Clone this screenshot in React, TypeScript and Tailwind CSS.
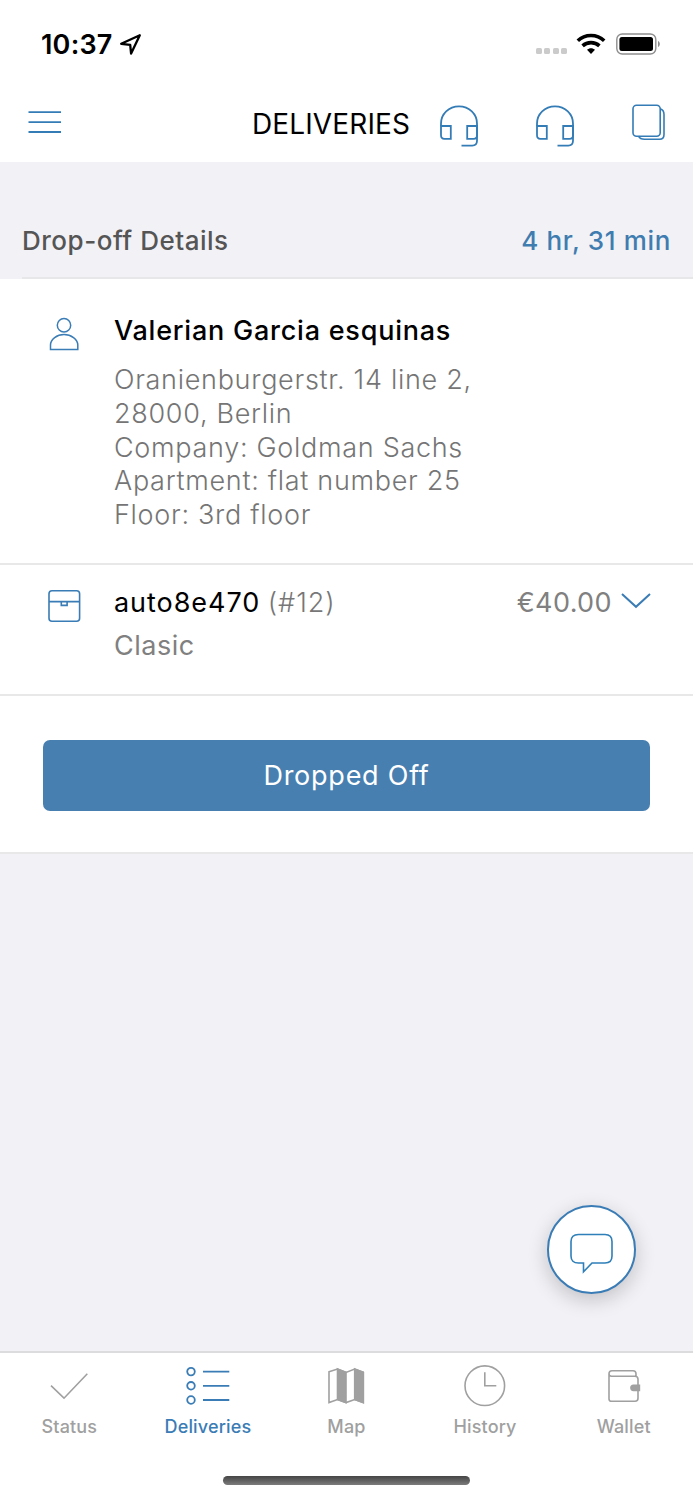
import type { ReactNode } from 'react';

const address = [
  'Oranienburgerstr. 14 line 2,',
  '28000, Berlin',
  'Company: Goldman Sachs',
  'Apartment: flat number 25',
  'Floor: 3rd floor',
];

function HeadsetIcon() {
  return (
    <svg width="40" height="44" viewBox="0 0 40 44" fill="none" stroke="currentColor" strokeWidth="1.8">
      <path d="M2 21.7V19.5C2 10 9.8 2.4 20 2.4C30.2 2.4 38 10 38 19.5V36.8Q38 41.6 33.2 41.6H22.5" />
      <path d="M2 22H11.8V34.8H5.4Q2 34.8 2 31.2Z" />
      <path d="M38 22H28.2V34.8H34.6Q38 34.8 38 31.2Z" />
    </svg>
  );
}

function CardsIcon() {
  return (
    <svg width="36" height="38" viewBox="0 0 36 38" fill="none" stroke="currentColor" strokeWidth="1.6">
      <rect x="2" y="1.2" width="27.2" height="31" rx="3.5" />
      <path d="M29.2 4.8C31.5 5.6 33 7.5 33 10.5V30.5Q33 35.3 28.5 35.3H13.5C10.5 35.3 8.5 34.3 7.5 32.2" />
    </svg>
  );
}

function StatusBar() {
  return (
    <div className="flex h-[88px] items-center pl-[41px] pr-8">
      <span className="pt-0.5 text-[27px] font-semibold leading-8 tracking-[0.2px]">10:37</span>
      <svg className="ml-1.5" width="24" height="24" viewBox="0 0 24 24" fill="none" stroke="#000" strokeWidth="2.3" strokeLinejoin="round">
        <path d="M20.8 3.2L2.2 11.8L11.2 12.8L12.1 21.6Z" />
      </svg>
      <div className="ml-auto flex gap-[2.6px] pt-3.5">
        {[0, 1, 2, 3].map(i => (
          <span key={i} className="h-[5.6px] w-[5.8px] rounded-[1.6px] bg-[#cbcbcb]" />
        ))}
      </div>
      <svg className="ml-[9px]" width="30" height="22" viewBox="0 0 30 22" fill="none" stroke="#000" strokeWidth="3.6">
        <path d="M1.8 7.7C9 0.8 21 0.8 28.2 7.7" />
        <path d="M6.6 12.8C11.2 8.6 18.8 8.6 23.4 12.8" />
        <path d="M11 16.8C13.2 14.6 16.8 14.6 19 16.8L15 21Z" fill="#000" stroke="none" />
      </svg>
      <svg className="ml-[9px]" width="46" height="22" viewBox="0 0 46 22">
        <rect x="1.8" y="1" width="39" height="20" rx="5.5" fill="none" stroke="#8e8e8e" strokeWidth="1.4" />
        <rect x="4.4" y="4" width="33.6" height="14" rx="2.5" fill="#000" />
        <path d="M43 8C45.4 9 45.4 13 43 14Z" fill="#8e8e8e" />
      </svg>
    </div>
  );
}

function NavBar() {
  return (
    <div className="flex h-[74px] items-start pl-7 text-[#347cb6]">
      <svg className="mt-[22px]" width="34" height="24" viewBox="0 0 34 24" stroke="currentColor" strokeWidth="1.8">
        <path d="M0.5 2.2H33M0.5 12.2H33M0.5 22H33" />
      </svg>
      <h1 className="ml-[190px] mt-5 w-[187px] whitespace-nowrap text-[28px] leading-8 tracking-[0.12px] text-black">DELIVERIES</h1>
      <div className="mt-4 flex">
        <HeadsetIcon />
        <div className="ml-14"><HeadsetIcon /></div>
        <div className="ml-14"><CardsIcon /></div>
      </div>
    </div>
  );
}

function Tab({ label, active, children }: { label: string; active?: boolean; children: ReactNode }) {
  return (
    <div className={`flex flex-1 flex-col items-center ${active ? 'text-[#3a7cb5]' : 'text-[#a0a0a0]'}`}>
      <svg width="46" height="46" viewBox="0 0 46 46" fill="none" stroke="currentColor" strokeWidth="1.6">
        {children}
      </svg>
      <span className="mt-1 text-[18px] font-medium leading-6 tracking-[0.15px]">{label}</span>
    </div>
  );
}

export default function App() {
  return (
    <div className="flex h-[1500px] w-[693px] flex-col overflow-hidden bg-[#f2f1f6] font-['Inter',sans-serif] text-black">
      <header className="bg-white">
        <StatusBar />
        <NavBar />
      </header>

      {/* Section title */}
      <div className="h-[117px] pl-[22px]">
        <div className="flex h-full items-center justify-between border-b-2 border-[#e7e7e9] pr-[22px] pt-[42px] text-[26px] font-medium">
          <h2 className="whitespace-nowrap tracking-[0.52px] text-[#555]">Drop-off Details</h2>
          <span className="whitespace-nowrap tracking-[0.65px] text-[#3f7cb0]">4 hr, 31 min</span>
        </div>
      </div>

      <main className="bg-white">
        {/* Customer */}
        <section className="flex h-[286px] border-b-2 border-[#e8e8e8] pl-12 pt-9">
          <svg className="mt-[2px]" width="32" height="34" viewBox="0 0 32 34" fill="none" stroke="#3a7cb5" strokeWidth="1.5">
            <circle cx="16" cy="8.2" r="6.7" />
            <path d="M2.5 32.6V28C2.5 22 9 17.6 16 17.6S29.8 22 29.8 28V32.6Z" />
          </svg>
          <div className="ml-[34px] whitespace-nowrap text-[27px]">
            <p className="font-medium leading-8 tracking-[0.77px]">Valerian Garcia esquinas</p>
            <div className="mt-4 font-light leading-[33.8px] tracking-[0.7px] text-[#757575]">
              {address.map(line => (
                <p key={line}>{line}</p>
              ))}
            </div>
          </div>
        </section>

        {/* Order */}
        <section className="flex h-[131px] border-b-2 border-[#e8e8e8] pl-12 pr-[42px] pt-[22px]">
          <svg className="mt-[2px]" width="33" height="34" viewBox="0 0 33 34" fill="none" stroke="#3a7cb5" strokeWidth="1.6">
            <rect x="1" y="1.7" width="30.6" height="30.6" rx="3" />
            <path d="M1 12.6H31.6M13.3 12.6V16.4H19.1V12.6" />
          </svg>
          <div className="ml-[33px] whitespace-nowrap text-[27px] leading-8">
            <p className="tracking-[0.95px]">
              auto8e470 <span className="-ml-px font-light text-[#777]">(#12)</span>
            </p>
            <p className="mt-[11px] tracking-[0.5px] text-[#808080]">Clasic</p>
          </div>
          <span className="ml-auto text-[27px] leading-8 tracking-[0.4px] text-[#808080]">€40.00</span>
          <svg className="ml-[9px] mt-[5px]" width="30" height="18" viewBox="0 0 30 18" fill="none" stroke="#3a7cb5" strokeWidth="2">
            <path d="M1 2L15 14.8L29 2" />
          </svg>
        </section>

        <section className="h-[158px] border-b-2 border-[#e8e8e8] px-[43px] pt-11">
          <button className="h-[71px] w-full rounded-[7px] bg-[#487fb1] pt-0.5 text-[27px] tracking-[0.75px] text-white">Dropped Off</button>
        </section>
      </main>

      <button className="ml-[547px] mt-auto flex h-[89px] w-[89px] items-center justify-center rounded-full border-2 border-[#3a7cb5] bg-white pt-2 shadow-[0_6px_20px_rgba(0,0,0,0.2)]">
        <svg width="44" height="42" viewBox="0 0 44 42" fill="none" stroke="#2f7fb9" strokeWidth="1.6">
          <path d="M8.5 1.5H35Q42 1.5 42 8.5V23Q42 30 35 30H22L13.5 38.8V30H8.5Q1 30 1 23V8.5Q1 1.5 8.5 1.5Z" />
        </svg>
      </button>

      <footer className="mt-[57px] h-[149px] border-t-2 border-[#dcdcde] bg-white">
        <nav className="flex pt-3">
          <Tab label="Status">
            <path d="M5 20.7L18 33.2L41.3 8.7" />
          </Tab>
          <Tab label="Deliveries" active>
            <g strokeWidth="1.8">
              <circle cx="6" cy="6.6" r="3.8" />
              <circle cx="6" cy="20.8" r="3.8" />
              <circle cx="6" cy="35" r="3.8" />
              <path d="M18 6.6H44.3M18 20.8H44.3M18 35H44.3" />
            </g>
          </Tab>
          <Tab label="Map">
            <path d="M6 6.8L14.5 4L23 7.4L31.7 4L40.3 7.4V37.6L31.7 34.5L23 37.6L14.5 34.5L6 37.6Z" />
            <path d="M14.5 4L23 7.4V37.6L14.5 34.5ZM31.7 4L40.3 7.4V37.6L31.7 34.5Z" fill="currentColor" />
          </Tab>
          <Tab label="History">
            <circle cx="22.8" cy="20.7" r="19.8" />
            <path d="M22.8 7.2V20.7H34.3" />
          </Tab>
          <Tab label="Wallet">
            <path d="M8 8.8V34Q8 36.3 10.5 36.3H34Q37 36.3 37 33.3V14.3Q37 11.3 34 11.3H10.5Q8 11.3 8 8.8Q8 5.8 11 5.8H32Q35 5.8 35 8.8V11.8" />
            <path d="M39.2 19.5H32.5C28 19.5 28 26.2 32.5 26.2H39.2Z" fill="currentColor" stroke="none" />
          </Tab>
        </nav>
        <div className="mx-auto mt-[37px] h-[9px] w-[247px] rounded-full bg-linear-to-b from-[#454545] to-[#7c7c7c]" />
      </footer>
    </div>
  );
}
